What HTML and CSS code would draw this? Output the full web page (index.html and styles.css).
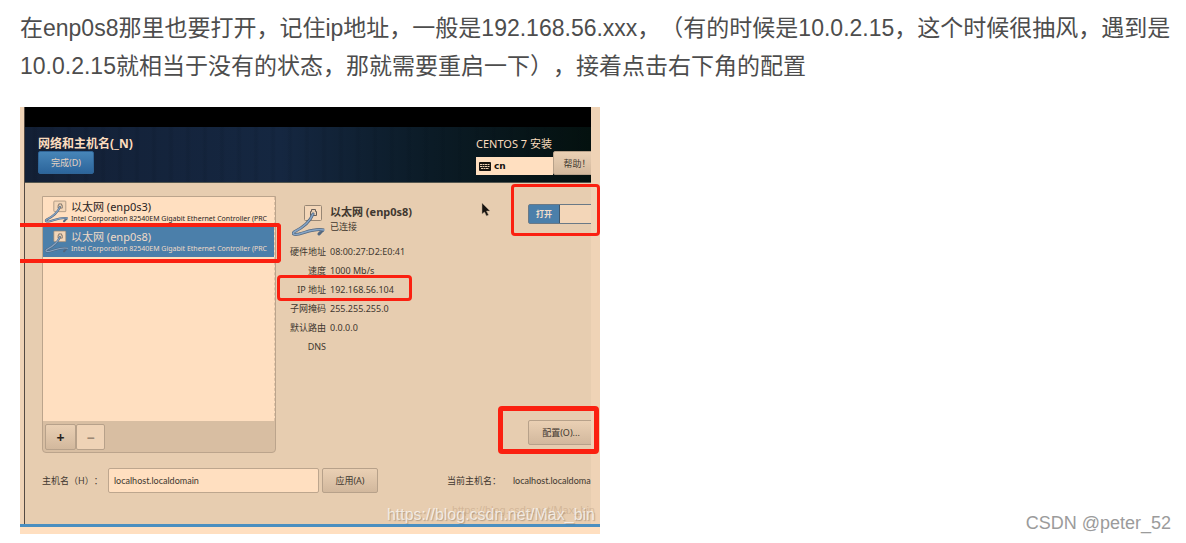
FILE: index.html
```html
<!DOCTYPE html>
<html lang="zh-CN">
<head>
  <meta charset="UTF-8" />
  <meta name="viewport" content="width=device-width, initial-scale=1.0"/>
  <title>CentOS 7 网络配置</title>
  <link rel="stylesheet" href="styles.css">
</head>
<body>
  <!-- shared network icon -->
  <svg width="0" height="0" class="defs" aria-hidden="true">
    <symbol id="net" viewBox="0 0 34 34">
      <rect x="12.500" y="1.500" width="17" height="15" rx="1" fill="#f3d6b8" stroke="#978674"/>
      <path d="M18.500 11.500V7.500h1V5.500h4v2h1v4z" fill="#ead0b4" stroke="#675e58"/>
      <path d="M21 10C18 18 12 23 2 28c-2 2 0 3 5 2 8-2 16-6 25-4-2 0-3 2-5 4" fill="none" stroke="#53677f" stroke-width="3" stroke-linecap="round"/>
      <path d="M21 10C18 18 12 23 2 28c-2 2 0 3 5 2 8-2 16-6 25-4" fill="none" stroke="#86a5c6" stroke-width="1.500" stroke-linecap="round"/>
    </symbol>
  </svg>

  <article>
    <p>在enp0s8那里也要打开，记住ip地址，一般是192.168.56.xxx，（有的时候是10.0.2.15，这个时候很抽风，遇到是10.0.2.15就相当于没有的状态，那就需要重启一下），接着点击右下角的配置</p>

    <figure>
      <div class="installer">
        <header>
          <div class="title">
            <h1>网络和主机名(_N)</h1>
            <button type="button" class="done">完成(D)</button>
          </div>
          <div class="product">
            <h2>CENTOS 7 安装</h2>
            <div class="tools">
              <span class="keyboard">
                <svg width="12" height="9" viewBox="0 0 12 9"><rect width="12" height="9" rx="1" fill="#17130f"/><path d="M1 2.500h10M1 4.500h10M2 6.500h8" stroke="#e8cdb0" stroke-dasharray="2 .5"/></svg>
                cn
              </span>
              <button type="button" class="help">帮助！</button>
            </div>
          </div>
        </header>

        <main>
          <div class="panes">
            <div class="devices">
              <ul>
                <li>
                  <svg width="26" height="24"><use href="#net"/></svg>
                  <div><b>以太网 (enp0s3)</b><small>Intel Corporation 82540EM Gigabit Ethernet Controller (PRC</small></div>
                </li>
                <li class="selected">
                  <svg width="26" height="24"><use href="#net"/></svg>
                  <div><b>以太网 (enp0s8)</b><small>Intel Corporation 82540EM Gigabit Ethernet Controller (PRC</small></div>
                </li>
              </ul>
              <div class="bar">
                <button type="button">+</button><button type="button" disabled>−</button>
              </div>
            </div>

            <div class="details">
              <div class="device">
                <svg width="34" height="34"><use href="#net"/></svg>
                <div class="name"><h3>以太网 (enp0s8)</h3><span>已连接</span></div>
                <button type="button" class="switch" role="switch" aria-checked="true"><span>打开</span></button>
              </div>
              <dl>
                <dt>硬件地址</dt><dd>08:00:27:D2:E0:41</dd>
                <dt>速度</dt><dd>1000 Mb/s</dd>
                <dt>IP 地址</dt><dd>192.168.56.104</dd>
                <dt>子网掩码</dt><dd>255.255.255.0</dd>
                <dt>默认路由</dt><dd>0.0.0.0</dd>
                <dt>DNS</dt><dd></dd>
              </dl>
              <button type="button" class="configure">配置(O)...</button>
            </div>
          </div>

          <form>
            <label for="hostname">主机名（H）：</label>
            <input type="text" id="hostname" value="localhost.localdomain" />
            <button type="button">应用(A)</button>
            <span class="current">当前主机名：</span>
            <span class="host">localhost.localdoma</span>
          </form>
        </main>
      </div>

      <svg class="cursor" width="9" height="14" viewBox="0 0 9 14"><path d="M1 0v11l2.500-2 2 4 2-1-2-4H9z" fill="#17130f" stroke="#b9a48d" stroke-width=".5"/></svg>
      <div class="mark mark-row"></div>
      <div class="mark mark-switch"></div>
      <div class="mark mark-ip"></div>
      <div class="mark mark-configure"></div>
      <span class="url url-small">https://blog.csdn.net/Max_bin</span>
      <span class="url">https://blog.csdn.net/Max_bin</span>
    </figure>
  </article>
  <div class="watermark">CSDN @peter_52</div>
</body>
</html>
```
FILE: styles.css
```css
* {
  box-sizing: border-box;
}
body {
  margin: 0;
  background: white;
  font-family: "Liberation Sans", "Noto Sans CJK SC", sans-serif;
  text-spacing-trim: space-all;
}
.defs {
  position: absolute;
}
article {
  padding: 9px 0 9px 20px;
}
p {
  margin: 0 0 22px;
  font-size: 23px;
  line-height: 38px;
  color: #4d4d4d;
}
h1, h2, h3, ul, dl, dd {
  margin: 0;
  padding: 0;
}

/* installer window */
figure {
  position: relative;
  max-width: 580px;
  margin: 0;
  padding: 0 9px 0 4px;
  background: #efd3b6;
  font-family: "Noto Sans", "Noto Sans CJK SC", sans-serif;
  font-size: 9px;
  line-height: 13px;
  color: #40372f;
}
figure::after {
  content: "";
  display: block;
  height: 7px;
  margin: 0 -9px 0 -4px;
  background: #ffdfc0;
  border-top: 3px solid #4b8fc0;
}
.installer {
  overflow: hidden;
  padding-top: 20px;
  border-left: 1px solid #554a42;
  background: linear-gradient(black 20px, #e7cdb0 20px);
}
button {
  padding: 0;
  font: inherit;
  color: inherit;
  white-space: nowrap;
  border: 1px solid #b7a18a;
  border-radius: 2px;
  background: linear-gradient(#ead0b4, #d2b89d);
}
header {
  display: flex;
  justify-content: space-between;
  height: 56px;
  padding: 9px 0 0 13px;
  background:
    repeating-linear-gradient(90deg, transparent 0 7px, rgba(0, 10, 20, .08) 9px 11px, transparent 13px 17px),
    linear-gradient(90deg, #132036, #152741 45%, #0b1b26 72%, #04110f);
  border-bottom: 1px solid #54564f;
}
h1, h2 {
  height: 15px;
  font-size: 12px;
  line-height: 15px;
  color: #fbdcbe;
}
h2 {
  font-weight: normal;
  font-size: 11px;
}
.done {
  display: block;
  width: 56px;
  height: 23px;
  color: #e4d2c2;
  border-color: #2f6496;
  background: linear-gradient(#4785b8, #2c659b);
}
.product {
  width: 115px;
}
.tools {
  display: flex;
  align-items: flex-end;
}
.keyboard {
  display: flex;
  align-items: center;
  flex: none;
  gap: 3px;
  width: 77px;
  height: 18px;
  padding-left: 3px;
  font-family: "DejaVu Sans", sans-serif;
  font-weight: bold;
  color: #17130f;
  background: #ffdfc0;
}
.help {
  width: 48px;
  height: 24px;
  flex: none;
}
main {
  padding: 13px 0 31px 17px;
}
.panes {
  display: flex;
}
.devices {
  display: flex;
  flex-direction: column;
  flex: none;
  width: 234px;
  height: 257px;
  border: 1px solid #bba48c;
  border-radius: 0 0 4px 4px;
  background: #d8bea2;
}
ul {
  flex: 1;
  list-style: none;
  background: #ffdfc0;
  border-right: 1px dashed #ddc1a5;
}
li {
  display: flex;
  gap: 1px;
  height: 30px;
  padding: 3px 0 0 1px;
  color: #29231e;
}
li svg {
  flex: none;
}
li b {
  display: block;
  font-size: 11px;
  font-weight: normal;
  line-height: 14px;
}
li small {
  display: block;
  font-size: 7px;
  line-height: 10px;
  white-space: nowrap;
}
.selected {
  color: #efdac6;
  background: #4b7faa;
}
.bar {
  display: flex;
  padding: 3px 2px 2px;
  height: 31px;
}
.bar button {
  width: 31px;
  height: 26px;
  font-size: 14px;
  font-weight: bold;
  color: #29231e;
}
.bar button:disabled {
  width: 29px;
  color: #9c8874;
  background: #efd3b6;
}
.details {
  display: flex;
  flex-direction: column;
  flex: 1;
  padding: 8px 0 8px 12px;
}
.device {
  display: flex;
  height: 38px;
  padding-left: 4px;
}
.device svg {
  flex: none;
  margin-right: 4px;
}
.name {
  flex: 1;
}
h3 {
  font-size: 11px;
  line-height: 16px;
}
.name span {
  display: block;
}
.switch {
  width: 67px;
  height: 20px;
  margin-right: -4px;
  text-align: left;
  border-color: #6a7986;
  background: #f3d6b8;
}
.switch span {
  display: block;
  width: 31px;
  line-height: 18px;
  font-weight: bold;
  font-size: 8px;
  text-align: center;
  color: #f3dfcb;
  background: #4b7faa;
  border-right: 1px solid #40576b;
}
dl {
  display: grid;
  grid-template-columns: 38px 1fr;
  column-gap: 4px;
  grid-auto-rows: 19px;
  line-height: 19px;
  white-space: nowrap;
}
dt {
  text-align: right;
}
.configure {
  width: 66px;
  height: 25px;
  margin: auto -3px 0 auto;
}
form {
  display: flex;
  align-items: center;
  margin-top: 15px;
  white-space: nowrap;
}
form > * {
  flex: none;
}
label {
  width: 66px;
}
input {
  width: 211px;
  height: 25px;
  padding: 0 5px;
  color: inherit;
  border: 1px solid #bda68e;
  border-radius: 2px;
  background: #ffdfc0;
}
input, .host {
  font-family: Lato, sans-serif;
  font-size: 9px;
  font-weight: normal;
}
form button {
  width: 56px;
  height: 25px;
  margin: 0 69px 0 3px;
}
.current {
  width: 66px;
}

/* red annotations */
.cursor {
  position: absolute;
  left: 461px;
  top: 96px;
}
.mark {
  position: absolute;
  border: 3px solid #fb2010;
  border-radius: 4px;
}
.mark-row {
  left: 0;
  top: 116px;
  width: 261px;
  height: 40px;
  border-width: 4px 4px 4px 0;
  border-radius: 0 4px 4px 0;
}
.mark-switch {
  right: 0;
  top: 77px;
  width: 89px;
  height: 52px;
}
.mark-ip {
  left: 257px;
  top: 168px;
  width: 135px;
  height: 26px;
}
.mark-configure {
  right: 1px;
  top: 299px;
  width: 101px;
  height: 48px;
  border-width: 5px;
}
.url {
  position: absolute;
  right: 5px;
  bottom: 10px;
  font-family: "Liberation Sans", sans-serif;
  font-size: 16px;
  line-height: 18px;
  color: rgba(255, 255, 255, .7);
  text-shadow: 1px 1px 1px rgba(110, 90, 70, .4);
}
.url-small {
  bottom: 17px;
  font-size: 11px;
  line-height: 14px;
  color: rgba(160, 125, 95, .3);
  text-shadow: none;
}
.watermark {
  position: absolute;
  right: 15px;
  bottom: 10px;
  font-size: 18px;
  line-height: 20px;
  color: #9b9b9b;
}
```
